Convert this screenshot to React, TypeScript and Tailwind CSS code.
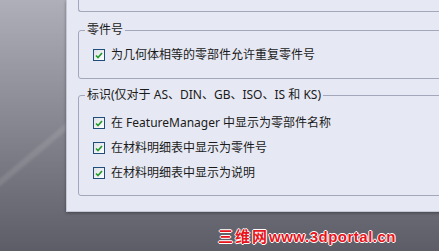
import React from "react";

const font = { fontFamily: 'Tahoma, "DejaVu Sans", "Noto Sans CJK SC", "Noto Sans", sans-serif' };

function Check({ label }: { label: string }) {
  return (
    <div className="flex items-center h-[16px] gap-[6px]">
      <div className="w-[12px] h-[12px] border border-[#1d4e7e] bg-gradient-to-br from-[#dcdfe6] to-[#ffffff] flex items-center justify-center">
        <svg width="8" height="7" viewBox="0 0 8 7">
          <path d="M1 3.5 L3 5.5 L7 1" stroke="#1f9a2a" strokeWidth="1.6" fill="none" />
        </svg>
      </div>
      <span
        className="text-[12px] text-[#1a1a1a] leading-[16px] whitespace-nowrap"
        style={{ fontFamily: '"Noto Sans", "Noto Sans CJK SC", sans-serif' }}
      >
        {label}
      </span>
    </div>
  );
}

export default function App() {
  return (
    <div
      className="relative w-[439px] h-[251px] overflow-hidden bg-gradient-to-b from-[#aeafb9] via-[#85868f] to-[#5c5d66]"
      style={font}
    >
      <div className="absolute left-[-20px] top-[150px] w-[110px] h-[6px] bg-white/10 -rotate-[40deg] blur-[1px]" />
      <div className="relative ml-[66px] w-[420px] h-[212px] bg-[#e6e9f3] border-l border-b border-[#c4c8d6] shadow-[0_1px_3px_rgba(0,0,0,0.35)] pl-[11px] flex flex-col">
        <div className="h-[12px] w-[400px] shrink-0 border-l border-b border-[#a3a7bb] rounded-bl-[3px]" />
        <fieldset className="mt-[10px] w-[400px] border border-[#a3a7bb] rounded-[3px] pb-[15px]">
          <legend
            className="ml-[6px] px-[2px] text-[12px] leading-[16px] text-[#1a1a1a]"
            style={{ fontFamily: '"Noto Sans", "Noto Sans CJK SC", sans-serif' }}
          >
            零件号
          </legend>
          <div className="pl-[14px] pt-[9px]">
            <Check label="为几何体相等的零部件允许重复零件号" />
          </div>
        </fieldset>
        <fieldset className="mt-[8px] w-[400px] border border-[#a3a7bb] rounded-[3px] pb-[14px]">
          <legend
            className="ml-[6px] px-[2px] text-[12px] leading-[16px] text-[#1a1a1a]"
            style={{ fontFamily: '"Noto Sans", "Noto Sans CJK SC", sans-serif' }}
          >
            标识(仅对于 AS、DIN、GB、ISO、IS 和 KS)
          </legend>
          <div className="pl-[14px] pt-[12px] flex flex-col gap-[9px]">
            <Check label="在 FeatureManager 中显示为零部件名称" />
            <Check label="在材料明细表中显示为零件号" />
            <Check label="在材料明细表中显示为说明" />
          </div>
        </fieldset>
      </div>
      <div
        className="absolute left-[218px] top-[229px] text-[15px] font-bold text-[#e8141c] leading-[15px] whitespace-nowrap"
        style={{
          fontFamily: '"Liberation Sans", "Noto Sans CJK SC", sans-serif',
          textShadow: "1px 0 #fff, -1px 0 #fff, 0 1px #fff, 0 -1px #fff",
        }}
      >
        <span className="tracking-[2px]">三维网</span>
        <span className="tracking-[0.5px]">www.3dportal.cn</span>
      </div>
    </div>
  );
}
